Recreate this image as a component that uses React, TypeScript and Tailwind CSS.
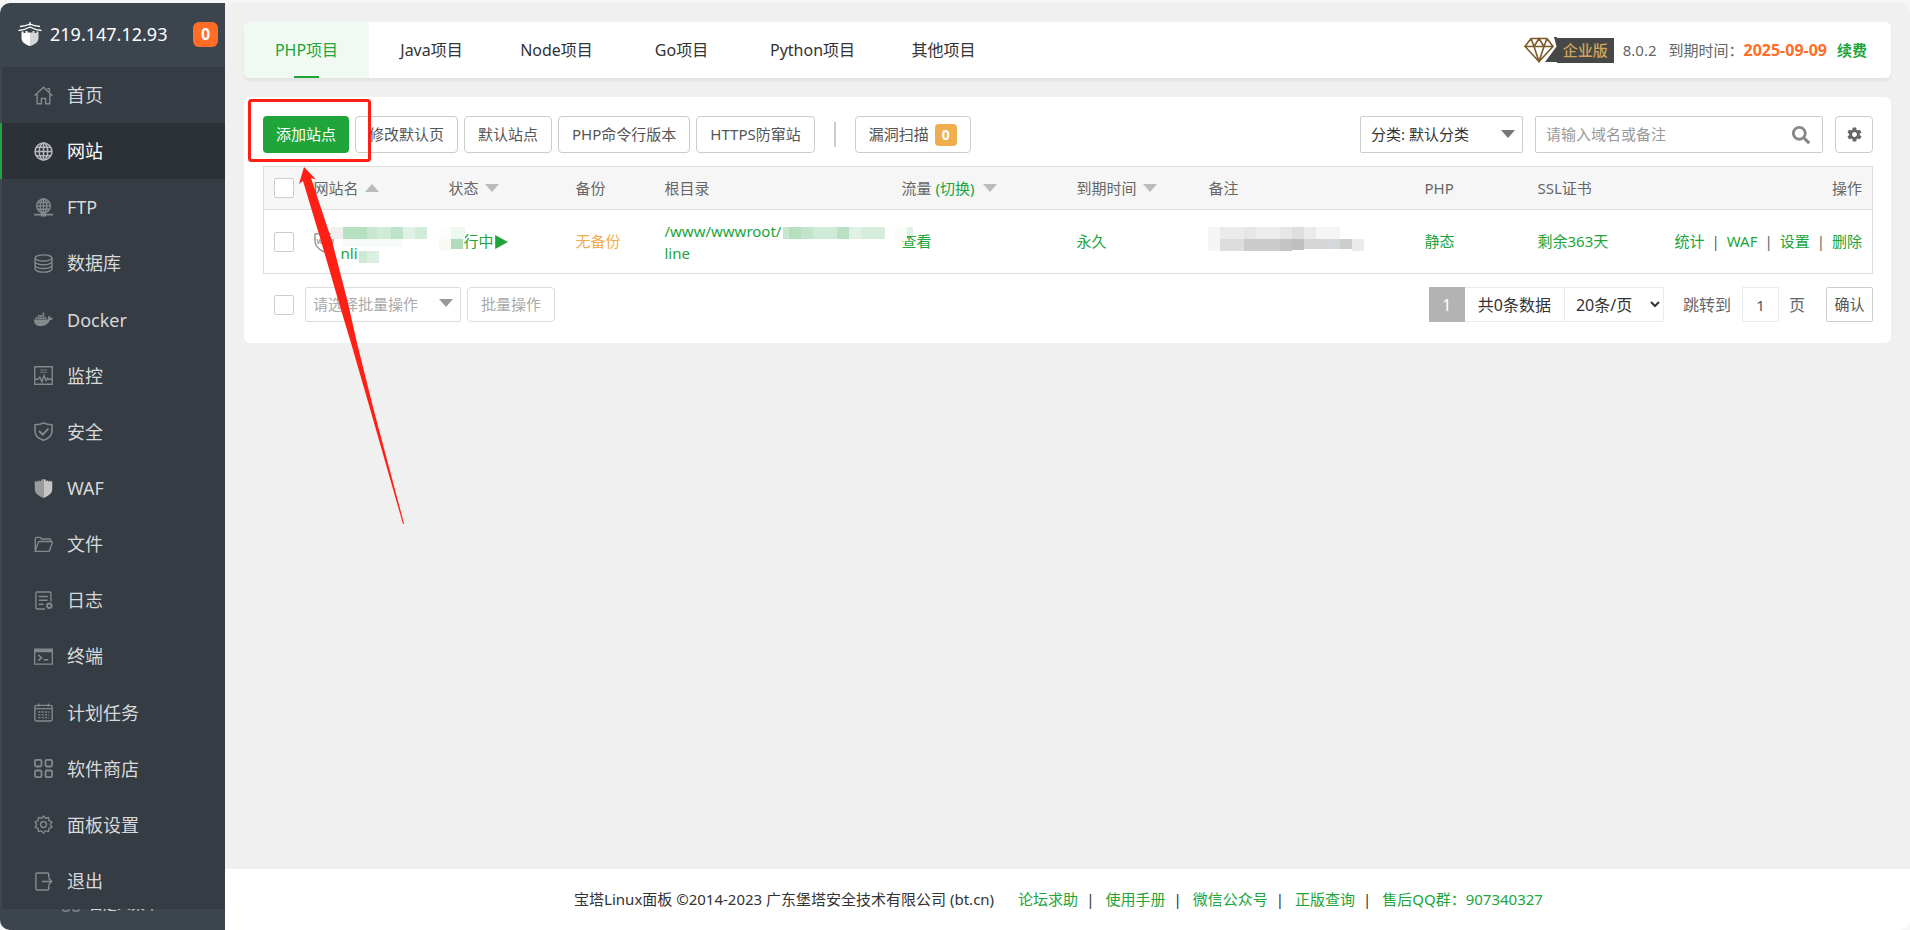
import type { ReactNode } from 'react';
import { FaDocker, FaSearch } from 'react-icons/fa';
import { IoMdSettings } from 'react-icons/io';

type NavItem = { label: string; icon: ReactNode; active?: boolean };

const line = { fill: 'none', stroke: 'currentColor', strokeWidth: 1.3 };

function Icon({ children }: { children: ReactNode }) {
  return (
    <svg viewBox="0 0 18 18" className="h-[19px] w-[19px] shrink-0" aria-hidden="true">
      {children}
    </svg>
  );
}

const navItems: NavItem[] = [
  {
    label: '首页',
    icon: (
      <Icon>
        <path {...line} d="M.5 9.3 9 1.2l8.500 8.100M3 7.500v9.300h4v-5h4v5h4V7.500M12.500 2.500h2.200v3" />
      </Icon>
    ),
  },
  {
    label: '网站',
    active: true,
    icon: (
      <Icon>
        <g {...line} strokeWidth={1.500}>
          <circle cx="9" cy="9" r="8" />
          <ellipse cx="9" cy="9" rx="4" ry="8" />
          <path d="M9 1v16M1 9h16M2.200 5h13.600M2.200 13h13.600" />
        </g>
      </Icon>
    ),
  },
  {
    label: 'FTP',
    icon: (
      <Icon>
        <circle {...line} cx="9" cy="7.500" r="6.500" />
        <ellipse {...line} cx="9" cy="7.500" rx="3.200" ry="6.500" />
        <path {...line} d="M9 1v13M2.500 7.500h13M3.500 4.300h11M3.500 10.700h11" />
        <path d="M0 15h6.500v-1h5v1H18v1.500h-6.500v1h-5v-1H0z" fill="currentColor" />
      </Icon>
    ),
  },
  {
    label: '数据库',
    icon: (
      <Icon>
        <ellipse {...line} cx="9" cy="3.700" rx="8" ry="2.900" />
        <path {...line} d="M1 3.700v10.600c0 1.600 3.600 2.900 8 2.900s8-1.300 8-2.900V3.700M1 7.300c0 1.600 3.600 2.900 8 2.900s8-1.300 8-2.900M1 10.800c0 1.600 3.600 2.900 8 2.900s8-1.300 8-2.900" />
      </Icon>
    ),
  },
  { label: 'Docker', icon: <FaDocker className="h-[19px] w-[19px] shrink-0" /> },
  {
    label: '监控',
    icon: (
      <Icon>
        <path {...line} d="M.7.7h16.600v16.600H.7zM1 12.500h3l1.500-2 2 4.500L9.500 9l2 5 1.500-2.500 1 1h3" />
        <path {...line} strokeOpacity={0.6} d="M5.500 3.800h7M5.500 6h7" />
      </Icon>
    ),
  },
  {
    label: '安全',
    icon: (
      <Icon>
        <path {...line} strokeWidth={1.500} d="M9 .8c2.500 1.500 5 1.700 8 1.800V9c0 4-3.500 6.800-8 8.400C4.500 15.800 1 13 1 9V2.600C4 2.500 6.500 2.300 9 .8z" />
        <path {...line} strokeWidth={1.800} d="m4.800 8.500 3.400 3.400 5.400-5.700" />
      </Icon>
    ),
  },
  {
    label: 'WAF',
    icon: (
      <Icon>
        <path d="M9 0v18C4 16 .7 13.500.7 9.500V2l1.800.8V1.500l2 1V1.300l2.300.8V.800z" fill="#9a9b9c" />
        <path d="M9 0v18c5-2 8.300-4.500 8.300-8.500V2l-1.800.8V1.500l-2 1V1.300l-2.300.8V.800z" fill="#c5c5c5" />
      </Icon>
    ),
  },
  {
    label: '文件',
    icon: (
      <Icon>
        <path {...line} d="M1.200 15.500V3.200q0-1 1-1H6l1.300 1.600h7.500q1 0 1 1V6M1.200 15.500h12.600q.8 0 1-.8l2.500-7.500q.2-1-.8-1H5q-.8 0-1 .8z" />
      </Icon>
    ),
  },
  {
    label: '日志',
    icon: (
      <Icon>
        <path {...line} d="M10.500 17H3q-1.200 0-1.200-1.200V2.200Q1.800 1 3 1h11.800Q16 1 16 2.200V10M4.500 5.200h8.500M4.500 8.800h8.500M4.500 12.500H9" />
        <circle {...line} strokeWidth={1.800} cx="14.500" cy="14" r="2.100" />
      </Icon>
    ),
  },
  {
    label: '终端',
    icon: (
      <Icon>
        <path {...line} d="M.6 2h16.800v14.200H.6z" />
        <path d="M.6 2h16.800v3H.6z" fill="currentColor" />
        <path {...line} strokeWidth={1.500} d="m4 7.500 3.200 2.700L4 12.800M9 12h4.500" />
      </Icon>
    ),
  },
  {
    label: '计划任务',
    icon: (
      <Icon>
        <rect {...line} x=".8" y="2.200" width="16.400" height="14.800" rx="1.500" />
        <path {...line} d="M4.500.5v3M13.500.5v3M1 5.300h16" />
        <path {...line} strokeDasharray="2 1.200" d="M4 8.500h10.500M4 11.200h10.500M4 13.900h10.500" />
      </Icon>
    ),
  },
  {
    label: '软件商店',
    icon: (
      <Icon>
        <g {...line} strokeWidth={1.700}>
          <rect x=".9" y=".9" width="6.200" height="6.200" rx="1.300" />
          <rect x="10.900" y=".9" width="6.200" height="6.200" rx="1.300" />
          <rect x=".9" y="10.900" width="6.200" height="6.200" rx="1.300" />
          <rect x="10.900" y="10.900" width="6.200" height="6.200" rx="1.300" />
        </g>
      </Icon>
    ),
  },
  {
    label: '面板设置',
    icon: (
      <Icon>
        <circle {...line} cx="9" cy="9" r="2.800" />
        <path {...line} strokeLinejoin="round" d="m9 .8 1.800 2.300 3-.7.400 3 2.800 1.300L15.500 9l1.500 2.400-2.800 1.300-.4 3-3-.7L9 17.200 7.200 15l-3 .7-.4-3L1 11.400 2.500 9 1 6.700l2.800-1.300.4-3 3 .7z" />
      </Icon>
    ),
  },
  {
    label: '退出',
    icon: (
      <Icon>
        <path {...line} strokeWidth={1.400} d="M14 5.500V2.200Q14 1 12.800 1H3Q1.800 1 1.800 2.200v13.600Q1.800 17 3 17h9.800q1.200 0 1.200-1.200v-3.300M7.500 9h9M13.800 6l3 3-3 3" />
      </Icon>
    ),
  },
];

const tabs = ['PHP项目', 'Java项目', 'Node项目', 'Go项目', 'Python项目', '其他项目'];
const tools = ['修改默认页', '默认站点', 'PHP命令行版本', 'HTTPS防窜站'];
const footerLinks = ['论坛求助', '使用手册', '微信公众号', '正版查询'];

// One entry is one block of the mosaic: x, y, width, height, colour
type Block = [number, number, number, number, string];

const nameBlocks: Block[] = [
  [2, 2, 12, 12, '#f0f1ee'],
  [14, 2, 24, 12, '#b7dfc2'],
  [38, 2, 10, 12, '#c9e7d0'],
  [48, 2, 14, 12, '#d0ebd7'],
  [62, 2, 12, 12, '#bfe3c9'],
  [74, 2, 12, 12, '#e0f2e5'],
  [86, 2, 12, 12, '#d3ecda'],
  [14, 14, 60, 8, '#f7fbf8'],
  [30, 26, 8, 12, '#cde9d4'],
  [38, 26, 12, 12, '#dbf0e0'],
];
const statusBlocks: Block[] = [
  [0, 0, 12, 12, '#fcfefc'],
  [12, 0, 14, 12, '#edf8f0'],
  [0, 12, 12, 12, '#f7fbf4'],
  [12, 12, 12, 10, '#b2dcbd'],
];
const pathBlocks: Block[] = [
  [0, 0, 6, 12, '#c9e7d0'],
  [6, 0, 12, 12, '#b6dfc0'],
  [18, 0, 12, 12, '#c3e4cb'],
  [30, 0, 24, 12, '#cfead6'],
  [54, 0, 12, 12, '#bae0c4'],
  [66, 0, 12, 12, '#e0f2e5'],
  [78, 0, 24, 12, '#d5edda'],
];
const flowBlocks: Block[] = [
  [0, 0, 12, 14, '#fafcf9'],
  [12, 0, 6, 9, '#e1f2e5'],
];
const noteBlocks: Block[] = [
  [0, 0, 12, 24, '#f5f5f5'],
  [12, 0, 24, 12, '#ebebeb'],
  [36, 0, 12, 12, '#e8e6e4'],
  [48, 0, 24, 12, '#ecedef'],
  [72, 0, 12, 12, '#e8e6e6'],
  [84, 0, 12, 12, '#dddfde'],
  [96, 0, 12, 12, '#ebebea'],
  [108, 0, 24, 12, '#f5f5f5'],
  [12, 12, 24, 12, '#dcdddf'],
  [36, 12, 36, 12, '#cccccc'],
  [72, 12, 12, 12, '#c5c3c3'],
  [84, 12, 12, 11, '#bfbfbf'],
  [96, 12, 24, 10, '#d6d6d6'],
  [120, 12, 12, 10, '#d6d9dc'],
  [132, 12, 12, 10, '#cdcdcb'],
  [144, 12, 12, 12, '#e9ebed'],
];

function Mosaic({ blocks, className }: { blocks: Block[]; className: string }) {
  return (
    <svg className={`absolute h-10 w-40 ${className}`} aria-hidden="true" shapeRendering="crispEdges">
      {blocks.map(([x, y, w, h, fill]) => (
        <rect key={`${x}-${y}`} x={x} y={y} width={w} height={h} fill={fill} />
      ))}
    </svg>
  );
}

function Caret({ up, className = 'text-[#bbb]' }: { up?: boolean; className?: string }) {
  return (
    <svg viewBox="0 0 14 8" className={`inline-block h-2 w-3.5 ${className}`} aria-hidden="true">
      <path d={up ? 'M0 8 7 0l7 8z' : 'M0 0h14L7 8z'} fill="currentColor" />
    </svg>
  );
}

function Check({ label }: { label: string }) {
  return (
    <input
      type="checkbox"
      aria-label={label}
      className="block h-5 w-5 shrink-0 appearance-none rounded-[2px] border border-[#ccc] bg-white checked:bg-[#20a53a]"
    />
  );
}

function Logo() {
  return (
    <svg viewBox="0 0 24 24" className="h-6 w-6 shrink-0" aria-hidden="true">
      <path d="M12 0v3.500M2 4.500Q8 4 12 2q4 2 10 2.500M.5 8.500Q7 8 12 5q5 3 11.500 3.500" fill="none" stroke="#fff" strokeWidth="1.300" />
      <path d="M3.500 9.500h2v1.500h2V9h2v1.500H12V24c-5-1.500-8.500-4-8.500-8z" fill="#fff" />
      <path d="M20.500 9.500h-2v1.500h-2V9h-2v1.500H12V24c5-1.500 8.500-4 8.500-8z" fill="#d4d6d8" />
    </svg>
  );
}

function Sidebar() {
  return (
    <aside className="flex w-[225px] shrink-0 flex-col overflow-hidden rounded-l-[10px] bg-[#3c444d]">
      <div className="flex h-16 shrink-0 items-center pb-0.5 pl-[18px] pr-[7px] text-white">
        <Logo />
        <span className="ml-2 text-lg">219.147.12.93</span>
        <span className="ml-auto flex h-[25px] w-[25px] items-center justify-center rounded-md bg-[#ff6d27] text-base font-bold">
          0
        </span>
      </div>
      <nav className="flex flex-1 flex-col bg-[#353c43]">
        {navItems.map((item) => (
          <a
            key={item.label}
            href="#"
            className={
              item.active
                ? 'flex min-h-12 flex-1 items-center gap-3.5 border-l-2 border-[#20a53a] bg-[#2c3138] pl-8 text-lg text-[#b5b7b9]'
                : 'flex min-h-12 flex-1 items-center gap-3.5 border-l-2 border-[#43474b] pl-8 text-lg text-[#85898c]'
            }
          >
            {item.icon}
            <span className={item.active ? 'text-white' : 'text-[#d8d9da]'}>{item.label}</span>
          </a>
        ))}
      </nav>
      {/* Custom menu entry, hidden behind the list except for its lower edge */}
      <div className="flex h-[21px] shrink-0 items-end overflow-hidden pb-[18px] pl-[62px] text-[#d8d9da]">
        <svg viewBox="0 0 18 18" className="h-[18px] w-[18px] shrink-0 text-[#85898c]" aria-hidden="true">
          <rect {...line} x="1" y="11" width="6" height="6" rx="1" />
          <rect {...line} x="11" y="11" width="6" height="6" rx="1" />
        </svg>
        <span className="ml-[9px] text-sm leading-4">自定义菜单</span>
      </div>
    </aside>
  );
}

function Tabs() {
  return (
    <header className="flex h-14 items-stretch overflow-hidden rounded-md bg-white shadow-[0_3px_3px_rgba(0,0,0,0.05)]">
      {tabs.map((tab, i) => (
        <button
          key={tab}
          type="button"
          className={
            i === 0
              ? 'relative min-w-[125px] bg-[#f0f9f2] px-[26px] text-base text-[#20a53a]'
              : 'min-w-[125px] px-[26px] text-base text-[#333]'
          }
        >
          {tab}
          {i === 0 && <span className="absolute bottom-0 left-[50px] h-0.5 w-[25px] bg-[#20a53a]" />}
        </button>
      ))}
      <div className="ml-auto flex items-center pr-6 text-[15px] text-[#666]">
        <svg viewBox="0 0 33 26" className="h-[26px] w-[33px]" aria-hidden="true">
          <path d="M30 0h3v25H21l9-12 2.500-3.500z" fill="#474747" />
          <path d="M7 1.500h16l6 8L15 24.500 1 9.500zM1 9.500h28M7 1.500l3 8 5 15 5-15 3-8M10 9.500l5-8 5 8" fill="none" stroke="#7d5b28" strokeWidth="1.600" />
        </svg>
        <span className="flex h-[25px] items-center bg-[#474747] px-1.5 font-medium text-[#d0a559]">企业版</span>
        <span className="ml-[9px]">8.0.2</span>
        <span className="ml-3">到期时间：</span>
        <span className="text-base font-bold text-[#ff6d27]">2025-09-09</span>
        <a href="#" className="ml-2.5 font-bold text-[#20a53a]">
          续费
        </a>
      </div>
    </header>
  );
}

function Toolbar() {
  return (
    <div className="flex h-[37px] items-stretch gap-1.5 text-[15px] text-[#555]">
      <button type="button" className="rounded bg-[#20a53a] px-[13px] text-white">
        添加站点
      </button>
      {tools.map((tool) => (
        <button key={tool} type="button" className="rounded border border-[#ccc] bg-white px-[13px]">
          {tool}
        </button>
      ))}
      <span className="mx-[13px] h-[25px] w-0.5 self-center bg-[#ccc]" />
      <button type="button" className="flex items-center gap-1.5 rounded border border-[#ccc] bg-white px-[13px]">
        漏洞扫描
        <span className="flex h-[22px] w-[22px] items-center justify-center rounded bg-[#f0ad4e] text-sm font-bold text-white">
          0
        </span>
      </button>
      <div className="ml-auto flex items-stretch gap-3">
        <div className="relative flex">
          <select aria-label="分类" className="w-[163px] appearance-none rounded-[2px] border border-[#ccc] bg-white pl-2.5 text-[#333]">
            <option>分类: 默认分类</option>
          </select>
          <Caret className="pointer-events-none absolute right-2 top-3.5 text-[#777]" />
        </div>
        <div className="flex w-[288px] items-center rounded-[2px] border border-[#ccc] pl-2.5 pr-3">
          <input
            type="text"
            aria-label="搜索"
            placeholder="请输入域名或备注"
            className="min-w-0 flex-1 outline-none placeholder:text-[#999]"
          />
          <button type="button" aria-label="搜索">
            <FaSearch className="h-[18px] w-[18px] text-[#888]" />
          </button>
        </div>
        <button type="button" aria-label="设置" className="flex w-[38px] items-center justify-center rounded border border-[#ccc]">
          <IoMdSettings className="h-[17px] w-[17px] text-[#666]" />
        </button>
      </div>
    </div>
  );
}

function SiteTable() {
  return (
    <table className="mt-[13px] w-full table-fixed border-collapse border border-[#ddd] text-left text-[15px] text-[#666]">
      <thead>
        <tr className="h-[43px] border-b border-[#ddd] bg-[#f6f6f6] [&>th]:px-2.5 [&>th]:font-normal">
          <th className="w-[40px]">
            <Check label="全选" />
          </th>
          <th className="w-[135px]">
            <span className="flex items-center gap-1.5">网站名 <Caret up /></span>
          </th>
          <th className="w-[127px]">
            <span className="flex items-center gap-1.5">状态 <Caret /></span>
          </th>
          <th className="w-[89px]">备份</th>
          <th className="w-[237px]">根目录</th>
          <th className="w-[175px]">
            <span className="flex items-center gap-1">
              流量
              <a href="#" className="mr-1 text-[#20a53a]">(切换)</a>
              <Caret />
            </span>
          </th>
          <th className="w-[132px]">
            <span className="flex items-center gap-1.5">到期时间 <Caret /></span>
          </th>
          <th>备注</th>
          <th className="w-[113px]">PHP</th>
          <th className="w-[113px]">SSL证书</th>
          <th className="w-[232px] text-right">操作</th>
        </tr>
      </thead>
      <tbody>
        <tr className="h-[64px] text-[#20a53a] [&>td]:px-2.5">
          <td>
            <Check label="选择站点" />
          </td>
          <td className="relative">
            <div className="flex items-center gap-[7px]">
              <svg viewBox="0 0 20 22" className="h-[22px] w-5 shrink-0 text-[#999]" aria-hidden="true">
                <path d="M10 1c3 1.800 6 2 9 2v7c0 5-4 8.500-9 11-5-2.500-9-6-9-11V3c3 0 6-.2 9-2z" fill="none" stroke="currentColor" strokeWidth="1.500" />
                <text x="10" y="13" textAnchor="middle" fontSize="7" fontWeight="700" fill="currentColor">WAF</text>
              </svg>
              <a href="#" className="pt-[22px] leading-[22px]">nli</a>
            </div>
            <Mosaic blocks={nameBlocks} className="left-[25px] top-[15px]" />
          </td>
          <td className="relative">
            <a href="#" className="flex items-center">
              运行中
              <svg viewBox="0 0 12 12" className="h-3.5 w-3.5" aria-hidden="true">
                <path d="M1 0v12l11-6z" fill="currentColor" />
              </svg>
            </a>
            <Mosaic blocks={statusBlocks} className="left-0 top-[17px]" />
          </td>
          <td>
            <a href="#" className="text-[#f0ad4e]">无备份</a>
          </td>
          <td className="relative leading-[22px]">
            <a href="#">
              /www/wwwroot/
              <br />
              line
            </a>
            <Mosaic blocks={pathBlocks} className="left-[128px] top-[17px]" />
          </td>
          <td className="relative">
            <a href="#">查看</a>
            <Mosaic blocks={flowBlocks} className="left-[3px] top-[17px]" />
          </td>
          <td>
            <a href="#">永久</a>
          </td>
          <td className="relative">
            <Mosaic blocks={noteBlocks} className="left-[9px] top-[17px]" />
          </td>
          <td>
            <a href="#">静态</a>
          </td>
          <td>
            <a href="#">剩余363天</a>
          </td>
          <td>
            <div className="flex justify-end gap-[7px]">
              <a href="#">统计</a>
              <span className="text-[#666]">|</span>
              <a href="#">WAF</a>
              <span className="text-[#666]">|</span>
              <a href="#">设置</a>
              <span className="text-[#666]">|</span>
              <a href="#">删除</a>
            </div>
          </td>
        </tr>
      </tbody>
    </table>
  );
}

function Pager() {
  return (
    <div className="mt-[13px] flex h-[35px] items-center text-[15px] text-[#aaa]">
      <div className="pl-[11px]">
        <Check label="全选" />
      </div>
      <div className="relative ml-[11px] flex h-full">
        <select aria-label="批量操作" className="w-[156px] appearance-none rounded-[2px] border border-[#ddd] bg-white pl-[7px] text-[#aaa]">
          <option>请选择批量操作</option>
        </select>
        <Caret className="pointer-events-none absolute right-2 top-3 text-[#999]" />
      </div>
      <button type="button" className="ml-1.5 h-full rounded border border-[#ddd] bg-white px-[13px]">
        批量操作
      </button>
      <div className="ml-auto flex h-full items-center text-base text-[#666]">
        <span className="flex h-full w-9 items-center justify-center bg-[#b3b3b3] text-white">1</span>
        <span className="flex h-full items-center border border-l-0 border-[#ececec] px-[13px] text-[#333]">共0条数据</span>
        <select aria-label="每页条数" className="h-full w-[99px] border border-l-0 border-[#ececec] bg-white pl-[7px] text-[#333]">
          <option>20条/页</option>
        </select>
        <label htmlFor="page" className="ml-[19px]">跳转到</label>
        <input
          id="page"
          type="text"
          defaultValue="1"
          className="ml-[11px] h-full w-[37px] border border-[#ececec] text-center text-[15px] text-[#555]"
        />
        <span className="ml-2.5">页</span>
        <button type="button" className="ml-[21px] h-full w-[47px] rounded-[2px] border border-[#ccc] text-[15px] text-[#555]">
          确认
        </button>
      </div>
    </div>
  );
}

function Footer() {
  return (
    <footer className="mt-auto flex h-[61px] items-center justify-center bg-white pr-[18px] text-[15px] text-[#333]">
      <span className="mr-6">宝塔Linux面板 ©2014-2023 广东堡塔安全技术有限公司 (bt.cn)</span>
      {footerLinks.map((link) => (
        <span key={link} className="mr-[11px] flex gap-2">
          <a href="#" className="text-[#20a53a]">{link}</a>
          <span>|</span>
        </span>
      ))}
      <a href="#" className="text-[#20a53a]">售后QQ群：907340327</a>
    </footer>
  );
}

// Red frame round the add button, with an arrow that points to it
function Callout() {
  return (
    <svg className="pointer-events-none absolute left-0 top-0 h-[430px] w-[170px]" aria-hidden="true">
      <rect x="5.500" y="3.500" width="120" height="60" rx="2" fill="none" stroke="#ff2015" strokeWidth="3" />
      <path
        d="M60 70 72 82.500 67 81 88 144 104 206 113 246 129 310 160 426.500 159 427 125.500 310 107 246 95 206 77 144 59 84 55 87z"
        fill="#ff2015"
      />
    </svg>
  );
}

export default function App() {
  return (
    <div className="flex min-h-screen bg-[#f6f6f6] pt-[3px] font-['Noto_Sans','Noto_Sans_CJK_SC',sans-serif]">
      <Sidebar />
      <div className="flex min-w-0 flex-1 flex-col overflow-hidden rounded-r-[10px] bg-[#f0f0f0]">
        <main className="px-[19px] py-[19px]">
          <Tabs />
          <section className="relative mt-[19px] rounded-md bg-white pb-[21px] pl-[19px] pr-[18px] pt-[19px]">
            <Toolbar />
            <SiteTable />
            <Pager />
            <Callout />
          </section>
        </main>
        <Footer />
      </div>
    </div>
  );
}
